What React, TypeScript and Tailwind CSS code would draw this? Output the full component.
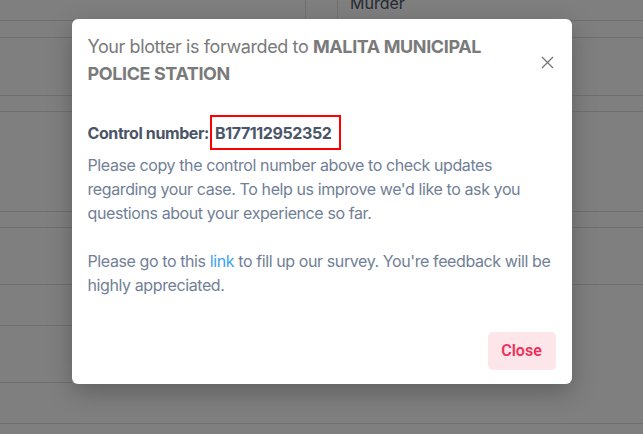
import React from 'react'

const rows = [
  { h: 'h-[21px]', line: true },
  { h: 'h-[17px]', line: true },
  { h: 'h-[58px]', line: true },
  { h: 'h-[16px]', line: true },
  { h: 'h-[100px]', line: true },
  { h: 'h-[16px]', line: true },
  { h: 'h-[57px]', line: true },
  { h: 'h-[41px]', line: false },
  { h: 'h-[57px]', line: false },
  { h: 'h-[41px]', line: true },
]

function CloseIcon() {
  return (
    <svg width="13" height="13" viewBox="0 0 13 13" fill="none" stroke="currentColor" strokeWidth="1.3">
      <path d="M1 1L12 12M12 1L1 12" />
    </svg>
  )
}

function App() {
  return (
    <div className="relative w-[643px] h-[434px] overflow-hidden bg-white" style={{ fontFamily: 'Inter, "Noto Sans", sans-serif' }}>
      {/* table behind the modal */}
      <div className="flex flex-col">
        <div className="flex h-[21px] border-b border-[#dedede]">
          <div className="w-[305px]" />
          <div className="w-[32px] border-l border-[#e2e2e2]" />
          <div className="border-l border-[#e2e2e2] pl-[12px] -mt-[9px] text-[16px] text-[#4a5568]">Murder</div>
        </div>
        {rows.slice(1).map((r, i) => (
          <div key={i} className={`${r.h} ${r.line ? 'border-b border-[#dedede]' : ''} flex`}>
            {!r.line && <div className="w-[72px] self-end border-b border-[#dedede]" />}
          </div>
        ))}
      </div>

      <div className="absolute inset-0 bg-black/50 flex justify-center pt-[19px]">
        <div className="w-[500px] h-[365px] bg-white rounded-[6px] shadow-[0_8px_24px_rgba(0,0,0,0.25)] flex flex-col tracking-[-0.4px]">
          <div className="flex justify-between items-start pl-[16px] pr-[17px] pt-[14px]">
            <h3 className="text-[18px] leading-[27px] text-[#7a7a7a] w-[420px]">
              Your blotter is forwarded to <span className="font-bold">MALITA MUNICIPAL POLICE STATION</span>
            </h3>
            <button className="text-[#757575] mt-[23px] mr-[1px]">
              <CloseIcon />
            </button>
          </div>

          <div className="px-[16px] mt-[28px] text-[16px] text-[#718096]">
            <p className="flex items-center font-bold text-[#4a5568]">
              <span>Control number:</span>
              <span className="h-[35px] flex items-center border-2 border-[#ff0000] pl-[3px] pr-[8px] ml-[1px]">B177112952352</span>
            </p>
            <p className="mt-[3px] leading-[24px]">
              Please copy the control number above to check updates regarding your case. To help us improve we'd like to ask you questions about your experience so far.
              <br />
              <br />
              Please go to this <a className="text-[#3ba3f0]">link</a> to fill up our survey. You're feedback will be highly appreciated.
            </p>
          </div>

          <div className="mt-auto flex justify-end px-[16px] pb-[14px]">
            <button className="h-[38px] w-[68px] rounded-[5px] bg-[#fde6ea] text-[#f0305a] font-semibold text-[16px] tracking-normal" style={{ fontFamily: 'Roboto, sans-serif' }}>
              Close
            </button>
          </div>
        </div>
      </div>
    </div>
  )
}

export default App
